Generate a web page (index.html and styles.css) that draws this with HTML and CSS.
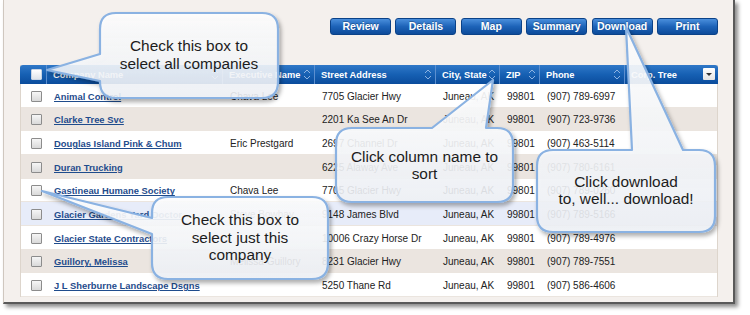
FILE: index.html
```html
<!DOCTYPE html>
<html lang="en">
<head>
    <title>Company Search Results</title>
    <meta charset="UTF-8">
    <meta name="viewport" content="width=device-width, initial-scale=1.0">
    <link rel="stylesheet" href="styles.css">
</head>
<body>
    <div class="frame">
        <div class="toolbar">
            <button class="btn">Review</button>
            <button class="btn">Details</button>
            <button class="btn">Map</button>
            <button class="btn">Summary</button>
            <button class="btn">Download</button>
            <button class="btn">Print</button>
        </div>

        <div class="grid">
            <div class="row head">
                <div class="cell chk"><span class="cb cb-head"></span></div>
                <div class="cell sort">Company Name</div>
                <div class="cell sort">Executive Name</div>
                <div class="cell sort">Street Address</div>
                <div class="cell sort">City, State</div>
                <div class="cell sort">ZIP</div>
                <div class="cell sort">Phone</div>
                <div class="cell">Corp. Tree <span class="drop"></span></div>
            </div>

            <div class="row">
                <div class="cell chk"><span class="cb"></span></div>
                <div class="cell"><a href="#">Animal Control</a></div>
                <div class="cell">Chava Lee</div>
                <div class="cell">7705 Glacier Hwy</div>
                <div class="cell">Juneau, AK</div>
                <div class="cell">99801</div>
                <div class="cell">(907) 789-6997</div>
                <div class="cell"></div>
            </div>
            <div class="row alt">
                <div class="cell chk"><span class="cb"></span></div>
                <div class="cell"><a href="#">Clarke Tree Svc</a></div>
                <div class="cell"></div>
                <div class="cell">2201 Ka See An Dr</div>
                <div class="cell">Juneau, AK</div>
                <div class="cell">99801</div>
                <div class="cell">(907) 723-9736</div>
                <div class="cell"></div>
            </div>
            <div class="row">
                <div class="cell chk"><span class="cb"></span></div>
                <div class="cell"><a href="#">Douglas Island Pink &amp; Chum</a></div>
                <div class="cell">Eric Prestgard</div>
                <div class="cell">2697 Channel Dr</div>
                <div class="cell">Juneau, AK</div>
                <div class="cell">99801</div>
                <div class="cell">(907) 463-5114</div>
                <div class="cell"></div>
            </div>
            <div class="row alt">
                <div class="cell chk"><span class="cb"></span></div>
                <div class="cell"><a href="#">Duran Trucking</a></div>
                <div class="cell"></div>
                <div class="cell">6225 Alaway Ave</div>
                <div class="cell">Juneau, AK</div>
                <div class="cell">99801</div>
                <div class="cell">(907) 780-6161</div>
                <div class="cell"></div>
            </div>
            <div class="row">
                <div class="cell chk"><span class="cb"></span></div>
                <div class="cell"><a href="#">Gastineau Humane Society</a></div>
                <div class="cell">Chava Lee</div>
                <div class="cell">7705 Glacier Hwy</div>
                <div class="cell">Juneau, AK</div>
                <div class="cell">99801</div>
                <div class="cell">(907) 789-0260</div>
                <div class="cell"></div>
            </div>
            <div class="row hover">
                <div class="cell chk"><span class="cb"></span></div>
                <div class="cell"><a href="#">Glacier Gardens Yard Doctor</a></div>
                <div class="cell">Steve Bowhay</div>
                <div class="cell">9148 James Blvd</div>
                <div class="cell">Juneau, AK</div>
                <div class="cell">99801</div>
                <div class="cell">(907) 789-5166</div>
                <div class="cell"></div>
            </div>
            <div class="row">
                <div class="cell chk"><span class="cb"></span></div>
                <div class="cell"><a href="#">Glacier State Contractors</a></div>
                <div class="cell"></div>
                <div class="cell">10006 Crazy Horse Dr</div>
                <div class="cell">Juneau, AK</div>
                <div class="cell">99801</div>
                <div class="cell">(907) 789-4976</div>
                <div class="cell"></div>
            </div>
            <div class="row alt">
                <div class="cell chk"><span class="cb"></span></div>
                <div class="cell"><a href="#">Guillory, Melissa</a></div>
                <div class="cell">Melissa Guillory</div>
                <div class="cell">8231 Glacier Hwy</div>
                <div class="cell">Juneau, AK</div>
                <div class="cell">99801</div>
                <div class="cell">(907) 789-7551</div>
                <div class="cell"></div>
            </div>
            <div class="row">
                <div class="cell chk"><span class="cb"></span></div>
                <div class="cell"><a href="#">J L Sherburne Landscape Dsgns</a></div>
                <div class="cell"></div>
                <div class="cell">5250 Thane Rd</div>
                <div class="cell">Juneau, AK</div>
                <div class="cell">99801</div>
                <div class="cell">(907) 586-4606</div>
                <div class="cell"></div>
            </div>
        </div>
    </div>

    <!-- help callouts drawn over the page -->
    <svg class="bubbles" width="750" height="315" viewBox="0 0 750 315">
        <defs>
            <filter id="shade" x="-10%" y="-10%" width="130%" height="130%">
                <feDropShadow dx="2" dy="3" stdDeviation="2" flood-color="#000" flood-opacity="0.35"/>
            </filter>
            <linearGradient id="fill" x1="0" y1="0" x2="0" y2="1">
                <stop offset="0" stop-color="#ffffff" stop-opacity="0.9"/>
                <stop offset="1" stop-color="#f1f4f9" stop-opacity="0.86"/>
            </linearGradient>
        </defs>
        <path class="bubble" d="M116 13 H262 Q278 13 278 29 V82 Q278 98 262 98 H116 Q100 98 100 82 V81 L47 70 L100 54 V29 Q100 13 116 13 Z"/>
        <path class="bubble" d="M352 128 H432 L493 80 L486 128 H497 Q513 128 513 144 V186 Q513 202 497 202 H352 Q336 202 336 186 V144 Q336 128 352 128 Z"/>
        <path class="bubble" d="M553 150 H632 L626 27 L683 150 H699 Q715 150 715 166 V216 Q715 232 699 232 H553 Q537 232 537 216 V166 Q537 150 553 150 Z"/>
        <path class="bubble" d="M168 197 H312 Q328 197 328 213 V263 Q328 279 312 279 H168 Q152 279 152 263 V234 L42 191 L152 218 V213 Q152 197 168 197 Z"/>
    </svg>

    <div class="tip tip-all">Check this box to<br>select all companies</div>
    <div class="tip tip-sort">Click column name to<br>sort</div>
    <div class="tip tip-down">Click download<br>to, well... download!</div>
    <div class="tip tip-one">Check this box to<br>select just this<br>company</div>
</body>
</html>
```

FILE: styles.css
```css
body {
    margin: 0;
    background: #fff;
    font-family: "Liberation Sans", Arial, sans-serif;
    width: 750px;
    height: 315px;
    overflow: hidden;
    position: relative;
}

.frame {
    margin-left: 3px;
    width: 732px;
    height: 304px;
    padding: 18px 15px 0 16px;
    box-sizing: border-box;
    background: #f4f0ed;
    border-left: 1px solid #cfc7bf;
    border-right: 2px solid #5a5a5a;
    border-bottom: 2px solid #5a5a5a;
    box-shadow: 3px 3px 4px rgba(0, 0, 0, 0.45);
}

.toolbar {
    display: flex;
    justify-content: flex-end;
    gap: 4.4px;
    height: 17px;
}

.btn {
    width: 61px;
    height: 17px;
    padding: 0;
    border: 1px solid #0b4288;
    border-radius: 3px;
    background: linear-gradient(#4a8fdc, #1d63b8 50%, #0d4b9a);
    color: #fff;
    font-family: "Liberation Sans", Arial, sans-serif;
    font-size: 10.5px;
    font-weight: bold;
    line-height: 15px;
    text-shadow: 0 -1px 0 rgba(0, 0, 0, 0.25);
}

.grid {
    margin-top: 30px;
    width: 698px;
    border-left: 1px solid #ddd5cc;
    border-right: 1px solid #ddd5cc;
    box-sizing: border-box;
}

.row {
    display: grid;
    grid-template-columns: 27px 176px 92px 121px 64px 40px 85px 1fr;
    height: 23.67px;
    background: #fff;
    border-bottom: 1px solid #ebe5df;
    box-sizing: border-box;
    font-size: 10px;
    color: #222;
}

.row.alt { background: #ebe5e0; }
.row.hover { background: #e7ecf9; }

.cell {
    display: flex;
    align-items: center;
    padding: 2px 0 0 6px;
    white-space: nowrap;
    overflow: hidden;
    position: relative;
}

.cell a {
    color: #1f4c8c;
    font-weight: bold;
    font-size: 9.4px;
}

.chk { padding-left: 10px; }

.cb {
    width: 9px;
    height: 9px;
    border: 1px solid #8c8c8c;
    border-radius: 1px;
    background: linear-gradient(#f6f6f6, #d9d9d9);
}

.row.head {
    height: 19px;
    margin: 0 -1px;
    border: 0;
    border-radius: 3px 3px 0 0;
    background: linear-gradient(#3078c8, #1660b3 50%, #0b4c9c);
    color: #fff;
    font-size: 9.3px;
    font-weight: bold;
}

.row.head .cell { padding-top: 0; border-right: 1px solid #5c8fcf; }
.row.head .cell:last-child { border-right: 0; }
.row.head .chk { padding-left: 11px; }

.cb-head {
    border-color: #c8d4e4;
    background: linear-gradient(#ffffff, #dfe4ea);
}

.sort::after {
    content: "";
    position: absolute;
    right: 3px;
    top: 3px;
    width: 8px;
    height: 13px;
    background:
        url("data:image/svg+xml;utf8,<svg xmlns='http://www.w3.org/2000/svg' width='8' height='13'><path d='M1 5 L4 2 L7 5 M1 8 L4 11 L7 8' fill='none' stroke='%238db3e2' stroke-width='1'/></svg>") no-repeat;
}

.drop {
    position: absolute;
    right: 3px;
    top: 3px;
    width: 12px;
    height: 12px;
    background: linear-gradient(#ffffff, #e4e4e4);
    border-radius: 1px;
}

.drop::after {
    content: "";
    position: absolute;
    left: 3px;
    top: 5px;
    border-left: 3px solid transparent;
    border-right: 3px solid transparent;
    border-top: 3px solid #333;
}

.bubbles {
    position: absolute;
    left: 0;
    top: 0;
    pointer-events: none;
}

.bubble {
    fill: url(#fill);
    stroke: #8ab2e2;
    stroke-width: 2.2;
    stroke-linejoin: round;
    filter: url(#shade);
}

.tip {
    position: absolute;
    display: flex;
    align-items: center;
    justify-content: center;
    text-align: center;
    font-size: 15.4px;
    line-height: 17.5px;
    color: #1c1c1c;
}

.tip-all { left: 100px; top: 13px; width: 178px; height: 83px; }
.tip-sort { left: 336px; top: 128px; width: 177px; height: 74px; }
.tip-down { left: 537px; top: 150px; width: 178px; height: 80px; }
.tip-one { left: 152px; top: 197px; width: 176px; height: 81px; }
```
